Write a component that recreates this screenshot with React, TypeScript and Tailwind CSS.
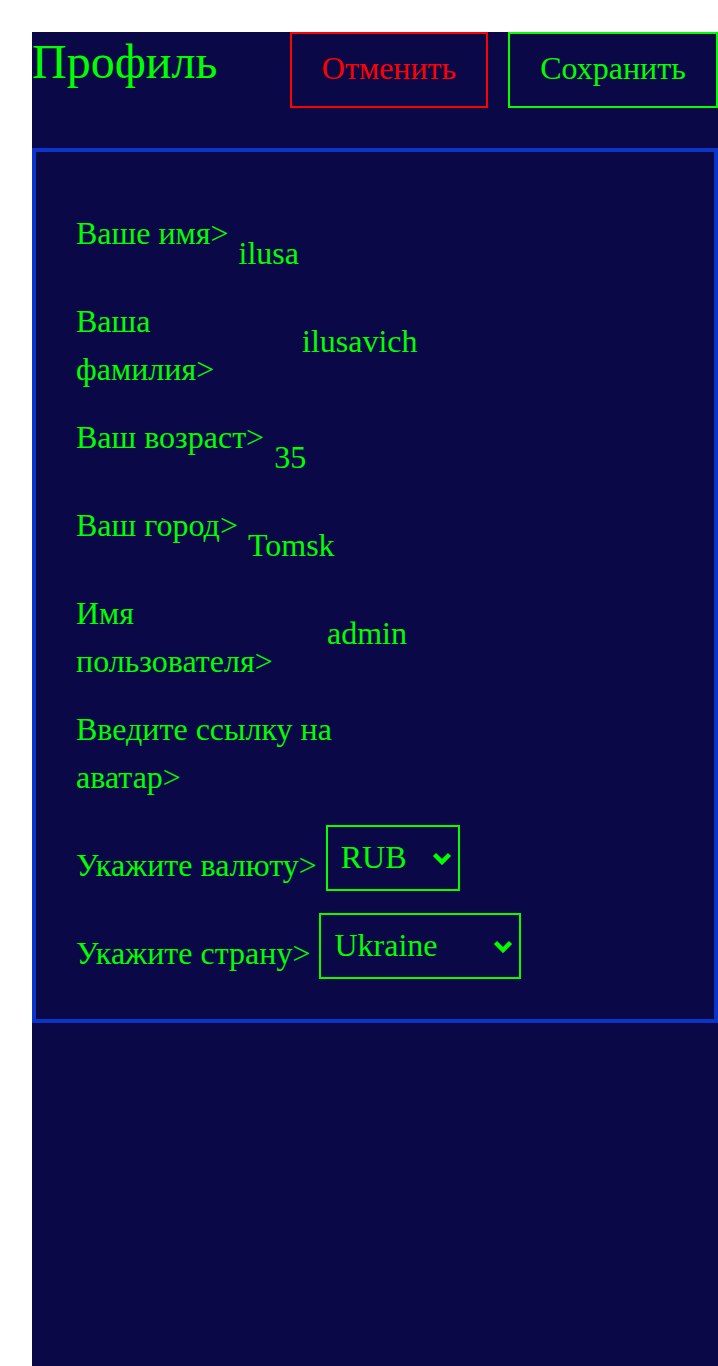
import React from 'react';

const Chevron: React.FC = () => (
  <svg width="20" height="13" viewBox="0 0 20 13" className="shrink-0">
    <polyline points="2.5,2.5 10,10 17.5,2.5" fill="none" stroke="#00ff00" strokeWidth="4.5" />
  </svg>
);

interface FieldProps {
  label: string;
  value?: string;
  labelClass?: string;
}

const Field: React.FC<FieldProps> = ({ label, value, labelClass }) => (
  <div className="flex items-start gap-[10px]">
    <span className={`leading-[48px] ${labelClass ?? ''}`}>{label}</span>
    {value && <span className="mt-[20px] leading-[48px]">{value}</span>}
  </div>
);

interface SelectFieldProps {
  label: string;
  value: string;
  boxClass: string;
  labelClass: string;
}

const SelectField: React.FC<SelectFieldProps> = ({ label, value, boxClass, labelClass }) => (
  <div className="flex items-start gap-[9px]">
    <span className={`leading-[48px] ${labelClass}`}>{label}</span>
    <div className={`h-[66px] border-2 border-[#00ff00] flex items-center justify-between pl-[13px] pr-[6px] ${boxClass}`}>
      <span className="leading-[48px] -mt-[3px]">{value}</span>
      <Chevron />
    </div>
  </div>
);

export default function App() {
  return (
    <div className="bg-white pl-[32px] pt-[32px] font-['Liberation_Serif',serif] text-[#00ff00]">
      <div className="bg-[#0a0846] min-h-[1334px]">
        <div className="flex items-start">
          <h1 className="w-[258px] text-[48px] leading-[60px] font-normal">Профиль</h1>
          <button className="w-[198px] h-[76px] pb-[5px] border-2 border-[#ff0000] text-[#ff0000] text-[32px]">Отменить</button>
          <button className="ml-[20px] w-[210px] h-[76px] pb-[5px] border-2 border-[#00ff00] text-[32px]">Сохранить</button>
        </div>
        <div className="mt-[40px] border-4 border-[#0a35c8] pt-[57px] pb-[40px] px-[40px] text-[32px] flex flex-col gap-[20px]">
          <Field label="Ваше имя>" value="ilusa" />
          <Field label="Ваша фамилия>" value="ilusavich" labelClass="w-[216px]" />
          <Field label="Ваш возраст>" value="35" />
          <Field label="Ваш город>" value="Tomsk" />
          <Field label="Имя пользователя>" value="admin" labelClass="w-[241px]" />
          <Field label="Введите ссылку на аватар>" labelClass="w-[260px]" />
          <SelectField label="Укажите валюту>" value="RUB" labelClass="mt-[20px]" boxClass="w-[134px] mt-[4px]" />
          <SelectField label="Укажите страну>" value="Ukraine" labelClass="mt-[18px]" boxClass="w-[202px] mt-[2px]" />
        </div>
      </div>
    </div>
  );
}
